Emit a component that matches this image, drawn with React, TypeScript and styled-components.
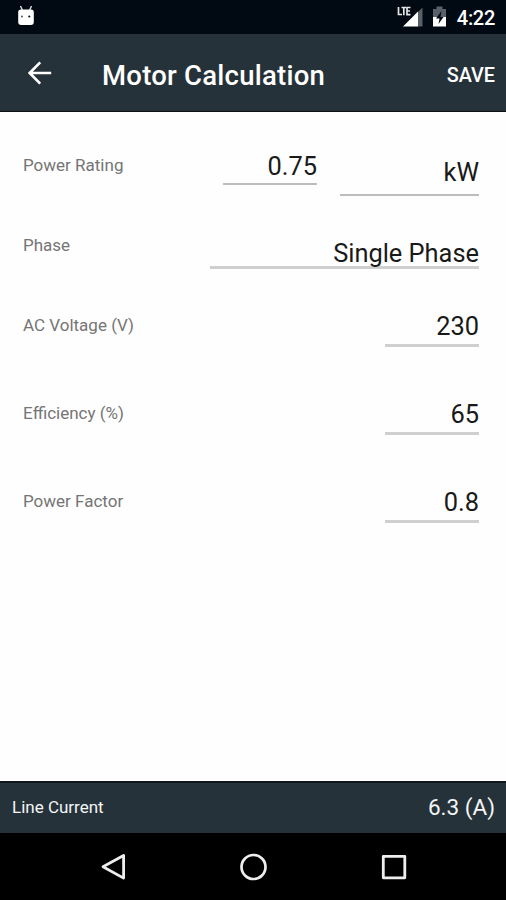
import React from "react";
import styled, { createGlobalStyle } from "styled-components";

const GlobalStyle = createGlobalStyle`
  * { box-sizing: border-box; }
  body { margin: 0; background: #fff; font-family: Roboto, "Liberation Sans", sans-serif; }
`;

const Screen = styled.div`
  width: 506px;
  height: 900px;
  display: flex;
  flex-direction: column;
  overflow: hidden;
  background: #fefefe;
`;

const StatusBar = styled.header`
  height: 34px;
  flex: none;
  display: flex;
  align-items: center;
  padding: 0 11px 2px 17px;
  background: #010a12;
`;

const StatusIcons = styled.div`
  display: flex;
  align-items: center;
  margin-left: auto;
`;

const SignalIcon = styled.svg`
  margin-top: 2px;
`;

const BatteryIcon = styled.svg`
  margin: 2px 0 0 9px;
`;

const Clock = styled.span`
  margin-left: 10px;
  font-size: 20px;
  line-height: 24px;
  font-weight: 500;
  letter-spacing: -0.3px;
  color: #fff;
  padding-top: 3px;
`;

const Toolbar = styled.div`
  height: 78px;
  flex: none;
  display: flex;
  align-items: center;
  padding: 5px 11px 0 28px;
  background: #263239;
  border-bottom: 1.5px solid #0c1114;
`;

const BackButton = styled.button`
  border: 0;
  padding: 0 0 4px;
  background: none;
  display: flex;
  width: 74px;
`;

const Title = styled.h1`
  margin: 0;
  padding-top: 2px;
  flex: 1;
  font-size: 27.5px;
  letter-spacing: 0.24px;
  line-height: 32px;
  font-weight: 500;
  color: #fff;
  white-space: nowrap;
`;

const SaveButton = styled.button`
  border: 0;
  padding: 1px 0 0;
  background: none;
  font: 500 19.8px/24px Roboto, sans-serif;
  color: #fff;
`;

const Form = styled.main`
  flex: 1;
  padding: 38px 27px 0 23px;
`;

const Row = styled.div<{ $height: number }>`
  height: ${(p) => p.$height}px;
  display: flex;
  align-items: flex-start;
`;

const Label = styled.label<{ $drop?: number }>`
  flex: 1;
  padding-top: ${(p) => p.$drop ?? 2}px;
  font-size: 17px;
  line-height: 24px;
  color: #757575;
  white-space: nowrap;
`;

const Field = styled.div<{ $width: number; $height?: number; $drop?: number; $thin?: boolean }>`
  width: ${(p) => p.$width}px;
  height: ${(p) => p.$height ?? 36}px;
  padding-top: ${(p) => p.$drop ?? 0}px;
  border-bottom: ${(p) => (p.$thin ? "2px solid #bdbdbd" : "3px solid #cfcfcf")};
  font-size: 25.4px;
  line-height: 30px;
  text-align: right;
  white-space: nowrap;
  color: #191919;

  & + & { margin-left: 23px; }
`;

const ResultBar = styled.footer`
  height: 52px;
  flex: none;
  display: flex;
  align-items: center;
  justify-content: space-between;
  padding: 0 11px 2px 12px;
  background: #263239;
  border-top: 2px solid #10181b;
  color: #f3f5f6;
`;

const ResultLabel = styled.span`
  font-size: 17px;
  line-height: 24px;
`;

const ResultValue = styled.span`
  font-size: 22.5px;
  line-height: 28px;
`;

const NavBar = styled.nav`
  height: 67px;
  flex: none;
  display: flex;
  justify-content: center;
  align-items: center;
  gap: 112px;
  background: #000;
`;

const fields = [
  { label: "AC Voltage (V)", value: "230", height: 88 },
  { label: "Efficiency (%)", value: "65", height: 88 },
  { label: "Power Factor", value: "0.8", height: 88 },
];

export default function App() {
  return (
    <Screen>
      <GlobalStyle />
      <StatusBar>
        <svg width="18" height="22" viewBox="0 0 18 22">
          <path d="M3.5 1 5.5 5.5M14.5 1 12.5 5.5" stroke="#ddd" strokeWidth="1.4" />
          <path d="M1.2 7Q1.2 4.5 4 4.5h10Q16.8 4.5 16.8 7V17q0 3-3 3H4.2q-3 0-3-3z" fill="#fff" />
          <circle cx="5" cy="11.5" r="1" fill="#555" />
          <circle cx="12.3" cy="11.5" r="1.1" fill="#111" />
        </svg>
        <StatusIcons>
          <SignalIcon width="26" height="22" viewBox="0 0 26 22">
            <path d="M21 6 25.5 1.5V20.5H21z" fill="#596069" />
            <path d="M21 5.5V20.5H6z" fill="#fff" />
            <path d="M1.5 1V8.5H5M4.5 1.5H9M6.8 1.5V9.3M13.5 1.5H10V8.7H13.5M10 5H13" fill="none" stroke="#010a12" strokeWidth="3" />
            <path d="M1.5 1V8.5H5M4.5 1.5H9M6.8 1.5V9.3M13.5 1.5H10V8.7H13.5M10 5H13" fill="none" stroke="#e4e6e8" strokeWidth="1.7" />
          </SignalIcon>
          <BatteryIcon width="15" height="22" viewBox="0 0 15 22">
            <path d="M1 3h3.5V0.5h6V3H14v8H1z" fill="#596069" />
            <path d="M1 11h13v9.5H1z" fill="#fff" />
            <path d="M9.5 5 4 12.5h3.5L6.5 18l5-7H8.5z" fill="#010a12" />
          </BatteryIcon>
          <Clock>4:22</Clock>
        </StatusIcons>
      </StatusBar>

      <Toolbar>
        <BackButton aria-label="Back">
          <svg width="24" height="24" viewBox="0 0 24 24" fill="none" stroke="#fff" strokeWidth="2.7">
            <path d="M23.2 12H2M12.2 1.4 1.6 12 12.2 22.6" />
          </svg>
        </BackButton>
        <Title>Motor Calculation</Title>
        <SaveButton>SAVE</SaveButton>
      </Toolbar>

      <Form>
        <Row $height={80}>
          <Label $drop={3}>Power Rating</Label>
          <Field $width={94} $height={35} $drop={1} $thin>0.75</Field>
          <Field $width={139} $height={46} $drop={7} $thin>kW</Field>
        </Row>
        <Row $height={81}>
          <Label $drop={3}>Phase</Label>
          <Field $width={269} $height={39} $drop={8}>Single Phase</Field>
        </Row>
        {fields.map((f) => (
          <Row key={f.label} $height={f.height}>
            <Label>{f.label}</Label>
            <Field $width={94}>{f.value}</Field>
          </Row>
        ))}
      </Form>

      <ResultBar>
        <ResultLabel>Line Current</ResultLabel>
        <ResultValue>6.3 (A)</ResultValue>
      </ResultBar>

      <NavBar>
        <svg width="28" height="28" viewBox="0 0 28 28" fill="none" stroke="#eee" strokeWidth="2.8" strokeLinejoin="round">
          <path d="M24.6 2.4V25.1L4 13.7z" />
        </svg>
        <svg width="28" height="28" viewBox="0 0 28 28" fill="none" stroke="#eee" strokeWidth="2.7">
          <circle cx="14.5" cy="14" r="12" />
        </svg>
        <svg width="28" height="28" viewBox="0 0 28 28" fill="none" stroke="#eee" strokeWidth="2.8" strokeLinejoin="round">
          <rect x="4.3" y="3.3" width="21.5" height="21.5" />
        </svg>
      </NavBar>
    </Screen>
  );
}
